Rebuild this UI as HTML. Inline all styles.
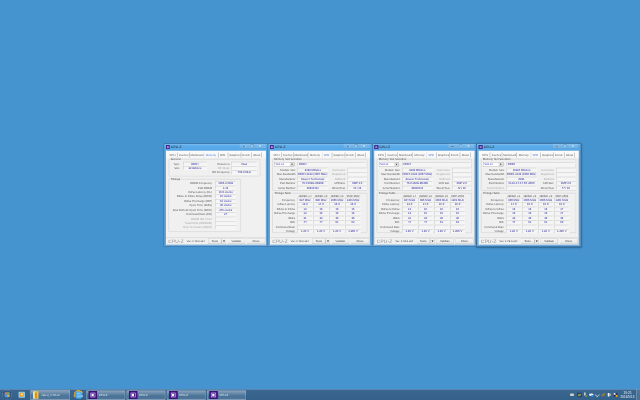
<!DOCTYPE html><html><head><meta charset="utf-8"><style>
html,body{margin:0;padding:0}
body{width:640px;height:400px;overflow:hidden;background:#4593cf;position:relative}
#s{position:absolute;left:0;top:0;width:2560px;height:1600px;transform:scale(0.25);transform-origin:0 0;filter:saturate(1);text-rendering:geometricPrecision}
#s div{position:absolute;box-sizing:border-box}
.t,.f,.b,.gbt{font-family:"Liberation Sans",sans-serif;font-size:11px;letter-spacing:0;color:#585858;white-space:nowrap;line-height:16px}
.win{background:linear-gradient(#6ab4ee,#58a9e8 12px,#56a8e8 30px,#5ea4dc 60px,#62a4da);border:3px solid rgba(25,55,95,.45);border-radius:7px 7px 3px 3px;box-shadow:inset 0 0 0 1px rgba(255,255,255,.35)}
.win.act{box-shadow:inset 0 0 0 1px rgba(255,255,255,.35),2px 2px 6px rgba(0,0,0,.3)}
.ico{background:#4a1890;border:1px solid #2a0a60;box-shadow:inset 0 0 0 3px #4a1890,inset 0 0 0 5px #c8bce0}
.cap{border:1px solid rgba(40,70,110,.45);border-top:none;border-radius:0 0 4px 4px;background:rgba(255,255,255,.12);box-shadow:inset 0 0 0 1px rgba(255,255,255,.3)}
.cl{background:#f0f0f0;border:1px solid #a9b8c8;border-left:4px solid #f4f0ec}
.gb{border:2px solid #cacaca;border-radius:2px;box-shadow:1px 1px 0 #fff inset,1px 1px 0 #fff}
.gbt{background:#f0f0f0;padding:0 2px;color:#383838}
.f{border:2px solid #c8c8c8;border-right-color:#f8f8f8;border-bottom-color:#f8f8f8;background:#f5f5f5;color:#5a5ac4;overflow:hidden}
.b{border:2px solid #c0c0c0;border-bottom-color:#a8a8a8;border-right-color:#b0b0b0;border-radius:3px;background:linear-gradient(#f8f8f8,#e6e6e6);text-align:left;color:#404040!important}
.dd{border:1px solid #7a7a7a;background:#fff}
.tb{background:linear-gradient(#6a88a8 0,#58789a 3px,#3a6690 5px,#34618a)}
.tbb{border:2px solid rgba(190,210,230,.5);border-radius:3px;background:linear-gradient(rgba(255,255,255,.4),rgba(255,255,255,.2) 40%,rgba(255,255,255,.1) 60%,rgba(255,255,255,.14));box-shadow:inset 0 0 0 1px rgba(255,255,255,.15)}
</style></head><body><div id="s"><div class="win" style="left:654px;top:573px;width:420px;height:414px"></div>
<div class="ico" style="left:664px;top:581px;width:15px;height:15px"></div>
<div class="t" style="left:684px;top:579px;text-align:left;font-size:13px;color:#202020;letter-spacing:.5px">CPU-Z</div>
<div class="cap" style="left:958px;top:574px;width:106px;height:21px"></div>
<div style="left:1002px;top:575px;width:1px;height:19px;background:rgba(255,255,255,.35)"></div>
<div style="left:1028px;top:575px;width:1px;height:19px;background:rgba(255,255,255,.35)"></div>
<div style="left:972px;top:584px;width:11px;height:4px;background:#f4eee0;border:1px solid rgba(60,80,110,.55)"></div>
<div style="left:1003px;top:578px;width:11px;height:10px;border:1px solid rgba(60,80,110,.55);box-shadow:inset 0 0 0 2px #f0ece0;border-top-width:3px"></div>
<div class="t" style="left:1036px;top:575px;font-size:14px;line-height:14px;color:#f4eadc;font-weight:bold;text-rendering:auto">x</div>
<div class="cl" style="left:664px;top:603px;width:400px;height:376px"></div>
<div style="left:665px;top:604px;width:398px;height:28px;background:linear-gradient(#fbfbfb,#f6f6f6)"></div>
<div class="t" style="left:670px;top:611px;text-align:left;color:#5a5a5a;width:40px;text-align:center">CPU</div>
<div class="t" style="left:706px;top:611px;text-align:left;color:#5a5a5a;width:58px;text-align:center">Caches</div>
<div class="t" style="left:754px;top:611px;text-align:left;color:#5a5a5a;width:68px;text-align:center">Mainboard</div>
<div class="t" style="left:814px;top:611px;text-align:left;color:#4a78d8;width:60px;text-align:center">Memory</div>
<div class="t" style="left:870px;top:611px;text-align:left;color:#5a5a5a;width:40px;text-align:center">SPD</div>
<div class="t" style="left:908px;top:611px;text-align:left;color:#5a5a5a;width:64px;text-align:center">Graphics</div>
<div class="t" style="left:960px;top:611px;text-align:left;color:#5a5a5a;width:50px;text-align:center">Bench</div>
<div class="t" style="left:1002px;top:611px;text-align:left;color:#5a5a5a;width:50px;text-align:center">About</div>
<div style="left:708px;top:610px;width:2px;height:20px;background:#a0a0a0"></div>
<div style="left:756px;top:610px;width:2px;height:20px;background:#a0a0a0"></div>
<div style="left:815px;top:610px;width:2px;height:20px;background:#d8d8d8"></div>
<div style="left:872px;top:610px;width:2px;height:20px;background:#a0a0a0"></div>
<div style="left:911px;top:610px;width:2px;height:20px;background:#a0a0a0"></div>
<div style="left:963px;top:610px;width:2px;height:20px;background:#a0a0a0"></div>
<div style="left:1005px;top:610px;width:2px;height:20px;background:#a0a0a0"></div>
<div style="left:1046px;top:610px;width:2px;height:20px;background:#a0a0a0"></div>
<div class="gb" style="left:675px;top:636px;width:367px;height:70px"></div>
<div class="gbt" style="left:681px;top:628px">General</div>
<div class="t" style="left:518px;top:647px;width:200px;text-align:right;">Type</div>
<div class="f" style="left:732px;top:647px;width:95px;height:16px;line-height:12px;text-align:center;color:#1f1f9e">DDR4</div>
<div class="t" style="left:518px;top:664px;width:200px;text-align:right;">Size</div>
<div class="f" style="left:732px;top:664px;width:95px;height:16px;line-height:12px;text-align:center;color:#1f1f9e">32 GBytes</div>
<div class="t" style="left:719px;top:647px;width:200px;text-align:right;">Channel #</div>
<div class="f" style="left:926px;top:647px;width:102px;height:16px;line-height:12px;text-align:center;color:#1f1f9e">Dual</div>
<div class="t" style="left:719px;top:664px;width:200px;text-align:right;color:#a8a8a8;">DC Mode</div>
<div class="f" style="left:926px;top:664px;width:102px;height:16px;line-height:12px;text-align:center;color:#1f1f9e"></div>
<div class="t" style="left:719px;top:682px;width:200px;text-align:right;">NB Frequency</div>
<div class="f" style="left:926px;top:682px;width:102px;height:16px;line-height:12px;text-align:center;color:#1f1f9e">706.8 MHz</div>
<div class="gb" style="left:674px;top:716px;width:290px;height:212px"></div>
<div class="gbt" style="left:680px;top:708px">Timings</div>
<div class="t" style="left:648px;top:725px;width:200px;text-align:right;">DRAM Frequency</div>
<div class="f" style="left:861px;top:725px;width:83px;height:16px;line-height:12px;text-align:center;color:#1f1f9e">1066.3 MHz</div>
<div class="t" style="left:648px;top:743px;width:200px;text-align:right;">FSB:DRAM</div>
<div class="f" style="left:861px;top:743px;width:83px;height:16px;line-height:12px;text-align:center;color:#1f1f9e">1:16</div>
<div class="t" style="left:648px;top:760px;width:200px;text-align:right;">CAS# Latency (CL)</div>
<div class="f" style="left:861px;top:760px;width:83px;height:16px;line-height:12px;text-align:center;color:#1f1f9e">15.0 clocks</div>
<div class="t" style="left:648px;top:778px;width:200px;text-align:right;">RAS# to CAS# Delay (tRCD)</div>
<div class="f" style="left:861px;top:778px;width:83px;height:16px;line-height:12px;text-align:center;color:#1f1f9e">15 clocks</div>
<div class="t" style="left:648px;top:796px;width:200px;text-align:right;">RAS# Precharge (tRP)</div>
<div class="f" style="left:861px;top:796px;width:83px;height:16px;line-height:12px;text-align:center;color:#1f1f9e">15 clocks</div>
<div class="t" style="left:648px;top:813px;width:200px;text-align:right;">Cycle Time (tRAS)</div>
<div class="f" style="left:861px;top:813px;width:83px;height:16px;line-height:12px;text-align:center;color:#1f1f9e">36 clocks</div>
<div class="t" style="left:648px;top:831px;width:200px;text-align:right;">Row Refresh Cycle Time (tRFC)</div>
<div class="f" style="left:861px;top:831px;width:83px;height:16px;line-height:12px;text-align:center;color:#1f1f9e">276 clocks</div>
<div class="t" style="left:648px;top:849px;width:200px;text-align:right;">Command Rate (CR)</div>
<div class="f" style="left:861px;top:849px;width:83px;height:16px;line-height:12px;text-align:center;color:#1f1f9e">2T</div>
<div class="t" style="left:648px;top:867px;width:200px;text-align:right;color:#a8a8a8;">DRAM Idle Timer</div>
<div class="f" style="left:861px;top:867px;width:83px;height:16px;line-height:12px;text-align:center;color:#1f1f9e"></div>
<div class="t" style="left:648px;top:884px;width:200px;text-align:right;color:#a8a8a8;">Total CAS# (tRDRAM)</div>
<div class="f" style="left:861px;top:884px;width:83px;height:16px;line-height:12px;text-align:center;color:#1f1f9e"></div>
<div class="t" style="left:648px;top:902px;width:200px;text-align:right;color:#a8a8a8;">Row To Column (tRCD)</div>
<div class="f" style="left:861px;top:902px;width:83px;height:16px;line-height:12px;text-align:center;color:#1f1f9e"></div>
<div style="left:665px;top:948px;width:398px;height:3px;background:#cfcfcf"></div>
<div style="left:665px;top:951px;width:398px;height:1px;background:#fafafa"></div>
<div class="t" style="left:673px;top:956px;text-align:left;font-size:19px;line-height:19px;color:#8c8c8c;letter-spacing:1px">CPU-Z</div>
<div class="t" style="left:740px;top:960px;text-align:left;font-size:10px;line-height:12px;color:#303030;width:86px;text-align:center;letter-spacing:.3px">Ver. 1.78.0.x64</div>
<div class="b" style="left:832px;top:953px;width:73px;height:23px;line-height:21px"><span style="display:inline-block;text-align:center;width:49px">Tools</span></div>
<div style="left:885px;top:957px;width:2px;height:15px;background:#909090"></div>
<div style="left:892px;top:962px;width:8px;height:5px;border-top:6px solid #202020;border-left:4px solid transparent;border-right:4px solid transparent;width:0;height:0;box-sizing:content-box"></div>
<div class="b" style="left:910px;top:953px;width:71px;height:23px;line-height:21px"><span style="display:inline-block;text-align:center;width:67px">Validate</span></div>
<div class="b" style="left:987px;top:953px;width:74px;height:23px;line-height:21px"><span style="display:inline-block;text-align:center;width:70px">Close</span></div>
<div class="win" style="left:1070px;top:573px;width:420px;height:414px"></div>
<div class="ico" style="left:1080px;top:581px;width:15px;height:15px"></div>
<div class="t" style="left:1100px;top:579px;text-align:left;font-size:13px;color:#202020;letter-spacing:.5px">CPU-Z</div>
<div class="cap" style="left:1374px;top:574px;width:106px;height:21px"></div>
<div style="left:1418px;top:575px;width:1px;height:19px;background:rgba(255,255,255,.35)"></div>
<div style="left:1444px;top:575px;width:1px;height:19px;background:rgba(255,255,255,.35)"></div>
<div style="left:1388px;top:584px;width:11px;height:4px;background:#f4eee0;border:1px solid rgba(60,80,110,.55)"></div>
<div style="left:1419px;top:578px;width:11px;height:10px;border:1px solid rgba(60,80,110,.55);box-shadow:inset 0 0 0 2px #f0ece0;border-top-width:3px"></div>
<div class="t" style="left:1452px;top:575px;font-size:14px;line-height:14px;color:#f4eadc;font-weight:bold;text-rendering:auto">x</div>
<div class="cl" style="left:1080px;top:603px;width:400px;height:376px"></div>
<div style="left:1081px;top:604px;width:398px;height:28px;background:linear-gradient(#fbfbfb,#f6f6f6)"></div>
<div class="t" style="left:1086px;top:611px;text-align:left;color:#5a5a5a;width:40px;text-align:center">CPU</div>
<div class="t" style="left:1122px;top:611px;text-align:left;color:#5a5a5a;width:58px;text-align:center">Caches</div>
<div class="t" style="left:1170px;top:611px;text-align:left;color:#5a5a5a;width:68px;text-align:center">Mainboard</div>
<div class="t" style="left:1230px;top:611px;text-align:left;color:#5a5a5a;width:60px;text-align:center">Memory</div>
<div class="t" style="left:1286px;top:611px;text-align:left;color:#4a78d8;width:40px;text-align:center">SPD</div>
<div class="t" style="left:1324px;top:611px;text-align:left;color:#5a5a5a;width:64px;text-align:center">Graphics</div>
<div class="t" style="left:1376px;top:611px;text-align:left;color:#5a5a5a;width:50px;text-align:center">Bench</div>
<div class="t" style="left:1418px;top:611px;text-align:left;color:#5a5a5a;width:50px;text-align:center">About</div>
<div style="left:1124px;top:610px;width:2px;height:20px;background:#a0a0a0"></div>
<div style="left:1172px;top:610px;width:2px;height:20px;background:#a0a0a0"></div>
<div style="left:1231px;top:610px;width:2px;height:20px;background:#a0a0a0"></div>
<div style="left:1288px;top:610px;width:2px;height:20px;background:#d8d8d8"></div>
<div style="left:1327px;top:610px;width:2px;height:20px;background:#a0a0a0"></div>
<div style="left:1379px;top:610px;width:2px;height:20px;background:#a0a0a0"></div>
<div style="left:1421px;top:610px;width:2px;height:20px;background:#a0a0a0"></div>
<div style="left:1462px;top:610px;width:2px;height:20px;background:#a0a0a0"></div>
<div class="gb" style="left:1089px;top:636px;width:381px;height:127px"></div>
<div class="gbt" style="left:1095px;top:628px">Memory Slot Selection</div>
<div class="dd" style="left:1098px;top:648px;width:80px;height:18px"></div>
<div class="t" style="left:1102px;top:650px;text-align:left;color:#3030c0">Slot #1</div>
<div style="left:1160px;top:650px;width:17px;height:15px;background:linear-gradient(#f8f8f8,#dcdcdc);border:1px solid #a0a0a0;border-radius:1px"></div>
<div style="left:1164px;top:655px;width:9px;height:5px;border-top:5px solid #202020;border-left:4px solid transparent;border-right:4px solid transparent;width:0;height:0;box-sizing:content-box"></div>
<div class="f" style="left:1190px;top:649px;width:274px;height:16px;line-height:12px;text-align:left;padding-left:4px;color:#1f1f9e">DDR4</div>
<div class="t" style="left:982px;top:671px;width:200px;text-align:right;">Module Size</div>
<div class="f" style="left:1190px;top:671px;width:122px;height:16px;line-height:12px;text-align:center;color:#1f1f9e">8192 MBytes</div>
<div class="t" style="left:982px;top:689px;width:200px;text-align:right;">Max Bandwidth</div>
<div class="f" style="left:1190px;top:689px;width:122px;height:16px;line-height:12px;text-align:center;color:#1f1f9e">DDR4-2133 (1067 MHz)</div>
<div class="t" style="left:982px;top:707px;width:200px;text-align:right;">Manufacturer</div>
<div class="f" style="left:1190px;top:707px;width:122px;height:16px;line-height:12px;text-align:center;color:#1f1f9e">Apacer Technology</div>
<div class="t" style="left:982px;top:725px;width:200px;text-align:right;">Part Number</div>
<div class="f" style="left:1190px;top:725px;width:122px;height:16px;line-height:12px;text-align:center;color:#1f1f9e">76.C102G.9D30B</div>
<div class="t" style="left:982px;top:743px;width:200px;text-align:right;">Serial Number</div>
<div class="f" style="left:1190px;top:743px;width:122px;height:16px;line-height:12px;text-align:center;color:#1f1f9e">36910421</div>
<div class="t" style="left:1181px;top:671px;width:200px;text-align:right;color:#a8a8a8;">Correction</div>
<div class="f" style="left:1390px;top:671px;width:77px;height:16px;line-height:12px;text-align:center;color:#1f1f9e"></div>
<div class="t" style="left:1181px;top:689px;width:200px;text-align:right;color:#a8a8a8;">Registered</div>
<div class="f" style="left:1390px;top:689px;width:77px;height:16px;line-height:12px;text-align:center;color:#1f1f9e"></div>
<div class="t" style="left:1181px;top:707px;width:200px;text-align:right;color:#a8a8a8;">Buffered</div>
<div class="f" style="left:1390px;top:707px;width:77px;height:16px;line-height:12px;text-align:center;color:#1f1f9e"></div>
<div class="t" style="left:1181px;top:725px;width:200px;text-align:right;">SPD Ext.</div>
<div class="f" style="left:1390px;top:725px;width:77px;height:16px;line-height:12px;text-align:center;color:#1f1f9e">XMP 2.0</div>
<div class="t" style="left:1181px;top:743px;width:200px;text-align:right;">Week/Year</div>
<div class="f" style="left:1390px;top:743px;width:77px;height:16px;line-height:12px;text-align:center;color:#1f1f9e">42 / 15</div>
<div class="gb" style="left:1089px;top:772px;width:381px;height:160px"></div>
<div class="gbt" style="left:1095px;top:764px">Timings Table</div>
<div class="t" style="left:1190px;top:776px;text-align:left;width:60px;text-align:center">JEDEC #4</div>
<div class="t" style="left:1254px;top:776px;text-align:left;width:60px;text-align:center">JEDEC #5</div>
<div class="t" style="left:1318px;top:776px;text-align:left;width:60px;text-align:center">JEDEC #6</div>
<div class="t" style="left:1382px;top:776px;text-align:left;width:60px;text-align:center">XMP-2602</div>
<div class="t" style="left:980px;top:791px;width:200px;text-align:right;">Frequency</div>
<div class="f" style="left:1190px;top:791px;width:60px;height:16px;line-height:12px;text-align:center;color:#1f1f9e">924 MHz</div>
<div class="f" style="left:1254px;top:791px;width:60px;height:16px;line-height:12px;text-align:center;color:#1f1f9e">985 MHz</div>
<div class="f" style="left:1318px;top:791px;width:60px;height:16px;line-height:12px;text-align:center;color:#1f1f9e">1066 MHz</div>
<div class="f" style="left:1382px;top:791px;width:60px;height:16px;line-height:12px;text-align:center;color:#1f1f9e">1301 MHz</div>
<div class="t" style="left:980px;top:809px;width:200px;text-align:right;">CAS# Latency</div>
<div class="f" style="left:1190px;top:809px;width:60px;height:16px;line-height:12px;text-align:center;color:#1f1f9e">13.0</div>
<div class="f" style="left:1254px;top:809px;width:60px;height:16px;line-height:12px;text-align:center;color:#1f1f9e">14.0</div>
<div class="f" style="left:1318px;top:809px;width:60px;height:16px;line-height:12px;text-align:center;color:#1f1f9e">15.0</div>
<div class="f" style="left:1382px;top:809px;width:60px;height:16px;line-height:12px;text-align:center;color:#1f1f9e">16.0</div>
<div class="t" style="left:980px;top:827px;width:200px;text-align:right;">RAS# to CAS#</div>
<div class="f" style="left:1190px;top:827px;width:60px;height:16px;line-height:12px;text-align:center;color:#1f1f9e">13</div>
<div class="f" style="left:1254px;top:827px;width:60px;height:16px;line-height:12px;text-align:center;color:#1f1f9e">15</div>
<div class="f" style="left:1318px;top:827px;width:60px;height:16px;line-height:12px;text-align:center;color:#1f1f9e">15</div>
<div class="f" style="left:1382px;top:827px;width:60px;height:16px;line-height:12px;text-align:center;color:#1f1f9e">16</div>
<div class="t" style="left:980px;top:845px;width:200px;text-align:right;">RAS# Precharge</div>
<div class="f" style="left:1190px;top:845px;width:60px;height:16px;line-height:12px;text-align:center;color:#1f1f9e">13</div>
<div class="f" style="left:1254px;top:845px;width:60px;height:16px;line-height:12px;text-align:center;color:#1f1f9e">15</div>
<div class="f" style="left:1318px;top:845px;width:60px;height:16px;line-height:12px;text-align:center;color:#1f1f9e">15</div>
<div class="f" style="left:1382px;top:845px;width:60px;height:16px;line-height:12px;text-align:center;color:#1f1f9e">16</div>
<div class="t" style="left:980px;top:863px;width:200px;text-align:right;">tRAS</div>
<div class="f" style="left:1190px;top:863px;width:60px;height:16px;line-height:12px;text-align:center;color:#1f1f9e">31</div>
<div class="f" style="left:1254px;top:863px;width:60px;height:16px;line-height:12px;text-align:center;color:#1f1f9e">33</div>
<div class="f" style="left:1318px;top:863px;width:60px;height:16px;line-height:12px;text-align:center;color:#1f1f9e">36</div>
<div class="f" style="left:1382px;top:863px;width:60px;height:16px;line-height:12px;text-align:center;color:#1f1f9e">36</div>
<div class="t" style="left:980px;top:881px;width:200px;text-align:right;">tRC</div>
<div class="f" style="left:1190px;top:881px;width:60px;height:16px;line-height:12px;text-align:center;color:#1f1f9e">44</div>
<div class="f" style="left:1254px;top:881px;width:60px;height:16px;line-height:12px;text-align:center;color:#1f1f9e">47</div>
<div class="f" style="left:1318px;top:881px;width:60px;height:16px;line-height:12px;text-align:center;color:#1f1f9e">51</div>
<div class="f" style="left:1382px;top:881px;width:60px;height:16px;line-height:12px;text-align:center;color:#1f1f9e">52</div>
<div class="t" style="left:980px;top:899px;width:200px;text-align:right;">Command Rate</div>
<div class="f" style="left:1190px;top:899px;width:60px;height:16px;line-height:12px;text-align:center;color:#1f1f9e"></div>
<div class="f" style="left:1254px;top:899px;width:60px;height:16px;line-height:12px;text-align:center;color:#1f1f9e"></div>
<div class="f" style="left:1318px;top:899px;width:60px;height:16px;line-height:12px;text-align:center;color:#1f1f9e"></div>
<div class="f" style="left:1382px;top:899px;width:60px;height:16px;line-height:12px;text-align:center;color:#1f1f9e"></div>
<div class="t" style="left:980px;top:917px;width:200px;text-align:right;">Voltage</div>
<div class="f" style="left:1190px;top:917px;width:60px;height:16px;line-height:12px;text-align:center;color:#1f1f9e">1.20 V</div>
<div class="f" style="left:1254px;top:917px;width:60px;height:16px;line-height:12px;text-align:center;color:#1f1f9e">1.20 V</div>
<div class="f" style="left:1318px;top:917px;width:60px;height:16px;line-height:12px;text-align:center;color:#1f1f9e">1.20 V</div>
<div class="f" style="left:1382px;top:917px;width:60px;height:16px;line-height:12px;text-align:center;color:#1f1f9e">1.350 V</div>
<div style="left:1081px;top:948px;width:398px;height:3px;background:#cfcfcf"></div>
<div style="left:1081px;top:951px;width:398px;height:1px;background:#fafafa"></div>
<div class="t" style="left:1089px;top:956px;text-align:left;font-size:19px;line-height:19px;color:#8c8c8c;letter-spacing:1px">CPU-Z</div>
<div class="t" style="left:1156px;top:960px;text-align:left;font-size:10px;line-height:12px;color:#303030;width:86px;text-align:center;letter-spacing:.3px">Ver. 1.78.0.x64</div>
<div class="b" style="left:1248px;top:953px;width:73px;height:23px;line-height:21px"><span style="display:inline-block;text-align:center;width:49px">Tools</span></div>
<div style="left:1301px;top:957px;width:2px;height:15px;background:#909090"></div>
<div style="left:1308px;top:962px;width:8px;height:5px;border-top:6px solid #202020;border-left:4px solid transparent;border-right:4px solid transparent;width:0;height:0;box-sizing:content-box"></div>
<div class="b" style="left:1326px;top:953px;width:71px;height:23px;line-height:21px"><span style="display:inline-block;text-align:center;width:67px">Validate</span></div>
<div class="b" style="left:1403px;top:953px;width:74px;height:23px;line-height:21px"><span style="display:inline-block;text-align:center;width:70px">Close</span></div>
<div class="win" style="left:1488px;top:573px;width:420px;height:414px"></div>
<div class="ico" style="left:1498px;top:581px;width:15px;height:15px"></div>
<div class="t" style="left:1518px;top:579px;text-align:left;font-size:13px;color:#202020;letter-spacing:.5px">CPU-Z</div>
<div class="cap" style="left:1792px;top:574px;width:106px;height:21px"></div>
<div style="left:1836px;top:575px;width:1px;height:19px;background:rgba(255,255,255,.35)"></div>
<div style="left:1862px;top:575px;width:1px;height:19px;background:rgba(255,255,255,.35)"></div>
<div style="left:1806px;top:584px;width:11px;height:4px;background:#f4eee0;border:1px solid rgba(60,80,110,.55)"></div>
<div style="left:1837px;top:578px;width:11px;height:10px;border:1px solid rgba(60,80,110,.55);box-shadow:inset 0 0 0 2px #f0ece0;border-top-width:3px"></div>
<div class="t" style="left:1870px;top:575px;font-size:14px;line-height:14px;color:#f4eadc;font-weight:bold;text-rendering:auto">x</div>
<div class="cl" style="left:1498px;top:603px;width:400px;height:376px"></div>
<div style="left:1499px;top:604px;width:398px;height:28px;background:linear-gradient(#fbfbfb,#f6f6f6)"></div>
<div class="t" style="left:1504px;top:611px;text-align:left;color:#5a5a5a;width:40px;text-align:center">CPU</div>
<div class="t" style="left:1540px;top:611px;text-align:left;color:#5a5a5a;width:58px;text-align:center">Caches</div>
<div class="t" style="left:1588px;top:611px;text-align:left;color:#5a5a5a;width:68px;text-align:center">Mainboard</div>
<div class="t" style="left:1648px;top:611px;text-align:left;color:#5a5a5a;width:60px;text-align:center">Memory</div>
<div class="t" style="left:1704px;top:611px;text-align:left;color:#4a78d8;width:40px;text-align:center">SPD</div>
<div class="t" style="left:1742px;top:611px;text-align:left;color:#5a5a5a;width:64px;text-align:center">Graphics</div>
<div class="t" style="left:1794px;top:611px;text-align:left;color:#5a5a5a;width:50px;text-align:center">Bench</div>
<div class="t" style="left:1836px;top:611px;text-align:left;color:#5a5a5a;width:50px;text-align:center">About</div>
<div style="left:1542px;top:610px;width:2px;height:20px;background:#a0a0a0"></div>
<div style="left:1590px;top:610px;width:2px;height:20px;background:#a0a0a0"></div>
<div style="left:1649px;top:610px;width:2px;height:20px;background:#a0a0a0"></div>
<div style="left:1706px;top:610px;width:2px;height:20px;background:#d8d8d8"></div>
<div style="left:1745px;top:610px;width:2px;height:20px;background:#a0a0a0"></div>
<div style="left:1797px;top:610px;width:2px;height:20px;background:#a0a0a0"></div>
<div style="left:1839px;top:610px;width:2px;height:20px;background:#a0a0a0"></div>
<div style="left:1880px;top:610px;width:2px;height:20px;background:#a0a0a0"></div>
<div class="gb" style="left:1507px;top:636px;width:381px;height:127px"></div>
<div class="gbt" style="left:1513px;top:628px">Memory Slot Selection</div>
<div class="dd" style="left:1516px;top:648px;width:80px;height:18px"></div>
<div class="t" style="left:1520px;top:650px;text-align:left;color:#3030c0">Slot #1</div>
<div style="left:1578px;top:650px;width:17px;height:15px;background:linear-gradient(#f8f8f8,#dcdcdc);border:1px solid #a0a0a0;border-radius:1px"></div>
<div style="left:1582px;top:655px;width:9px;height:5px;border-top:5px solid #202020;border-left:4px solid transparent;border-right:4px solid transparent;width:0;height:0;box-sizing:content-box"></div>
<div class="f" style="left:1608px;top:649px;width:274px;height:16px;line-height:12px;text-align:left;padding-left:4px;color:#1f1f9e">DDR4</div>
<div class="t" style="left:1400px;top:671px;width:200px;text-align:right;">Module Size</div>
<div class="f" style="left:1608px;top:671px;width:122px;height:16px;line-height:12px;text-align:center;color:#1f1f9e">8192 MBytes</div>
<div class="t" style="left:1400px;top:689px;width:200px;text-align:right;">Max Bandwidth</div>
<div class="f" style="left:1608px;top:689px;width:122px;height:16px;line-height:12px;text-align:center;color:#1f1f9e">DDR4-2133 (1067 MHz)</div>
<div class="t" style="left:1400px;top:707px;width:200px;text-align:right;">Manufacturer</div>
<div class="f" style="left:1608px;top:707px;width:122px;height:16px;line-height:12px;text-align:center;color:#1f1f9e">Apacer Technology</div>
<div class="t" style="left:1400px;top:725px;width:200px;text-align:right;">Part Number</div>
<div class="f" style="left:1608px;top:725px;width:122px;height:16px;line-height:12px;text-align:center;color:#1f1f9e">76.C102G.9D30B</div>
<div class="t" style="left:1400px;top:743px;width:200px;text-align:right;">Serial Number</div>
<div class="f" style="left:1608px;top:743px;width:122px;height:16px;line-height:12px;text-align:center;color:#1f1f9e">36910421</div>
<div class="t" style="left:1599px;top:671px;width:200px;text-align:right;color:#a8a8a8;">Correction</div>
<div class="f" style="left:1808px;top:671px;width:77px;height:16px;line-height:12px;text-align:center;color:#1f1f9e"></div>
<div class="t" style="left:1599px;top:689px;width:200px;text-align:right;color:#a8a8a8;">Registered</div>
<div class="f" style="left:1808px;top:689px;width:77px;height:16px;line-height:12px;text-align:center;color:#1f1f9e"></div>
<div class="t" style="left:1599px;top:707px;width:200px;text-align:right;color:#a8a8a8;">Buffered</div>
<div class="f" style="left:1808px;top:707px;width:77px;height:16px;line-height:12px;text-align:center;color:#1f1f9e"></div>
<div class="t" style="left:1599px;top:725px;width:200px;text-align:right;">SPD Ext.</div>
<div class="f" style="left:1808px;top:725px;width:77px;height:16px;line-height:12px;text-align:center;color:#1f1f9e">XMP 2.0</div>
<div class="t" style="left:1599px;top:743px;width:200px;text-align:right;">Week/Year</div>
<div class="f" style="left:1808px;top:743px;width:77px;height:16px;line-height:12px;text-align:center;color:#1f1f9e">42 / 15</div>
<div class="gb" style="left:1507px;top:772px;width:381px;height:160px"></div>
<div class="gbt" style="left:1513px;top:764px">Timings Table</div>
<div class="t" style="left:1608px;top:776px;text-align:left;width:60px;text-align:center">JEDEC #4</div>
<div class="t" style="left:1672px;top:776px;text-align:left;width:60px;text-align:center">JEDEC #5</div>
<div class="t" style="left:1736px;top:776px;text-align:left;width:60px;text-align:center">JEDEC #6</div>
<div class="t" style="left:1800px;top:776px;text-align:left;width:60px;text-align:center">XMP-2602</div>
<div class="t" style="left:1398px;top:791px;width:200px;text-align:right;">Frequency</div>
<div class="f" style="left:1608px;top:791px;width:60px;height:16px;line-height:12px;text-align:center;color:#1f1f9e">924 MHz</div>
<div class="f" style="left:1672px;top:791px;width:60px;height:16px;line-height:12px;text-align:center;color:#1f1f9e">985 MHz</div>
<div class="f" style="left:1736px;top:791px;width:60px;height:16px;line-height:12px;text-align:center;color:#1f1f9e">1066 MHz</div>
<div class="f" style="left:1800px;top:791px;width:60px;height:16px;line-height:12px;text-align:center;color:#1f1f9e">1301 MHz</div>
<div class="t" style="left:1398px;top:809px;width:200px;text-align:right;">CAS# Latency</div>
<div class="f" style="left:1608px;top:809px;width:60px;height:16px;line-height:12px;text-align:center;color:#1f1f9e">13.0</div>
<div class="f" style="left:1672px;top:809px;width:60px;height:16px;line-height:12px;text-align:center;color:#1f1f9e">14.0</div>
<div class="f" style="left:1736px;top:809px;width:60px;height:16px;line-height:12px;text-align:center;color:#1f1f9e">15.0</div>
<div class="f" style="left:1800px;top:809px;width:60px;height:16px;line-height:12px;text-align:center;color:#1f1f9e">16.0</div>
<div class="t" style="left:1398px;top:827px;width:200px;text-align:right;">RAS# to CAS#</div>
<div class="f" style="left:1608px;top:827px;width:60px;height:16px;line-height:12px;text-align:center;color:#1f1f9e">13</div>
<div class="f" style="left:1672px;top:827px;width:60px;height:16px;line-height:12px;text-align:center;color:#1f1f9e">15</div>
<div class="f" style="left:1736px;top:827px;width:60px;height:16px;line-height:12px;text-align:center;color:#1f1f9e">15</div>
<div class="f" style="left:1800px;top:827px;width:60px;height:16px;line-height:12px;text-align:center;color:#1f1f9e">16</div>
<div class="t" style="left:1398px;top:845px;width:200px;text-align:right;">RAS# Precharge</div>
<div class="f" style="left:1608px;top:845px;width:60px;height:16px;line-height:12px;text-align:center;color:#1f1f9e">13</div>
<div class="f" style="left:1672px;top:845px;width:60px;height:16px;line-height:12px;text-align:center;color:#1f1f9e">15</div>
<div class="f" style="left:1736px;top:845px;width:60px;height:16px;line-height:12px;text-align:center;color:#1f1f9e">15</div>
<div class="f" style="left:1800px;top:845px;width:60px;height:16px;line-height:12px;text-align:center;color:#1f1f9e">16</div>
<div class="t" style="left:1398px;top:863px;width:200px;text-align:right;">tRAS</div>
<div class="f" style="left:1608px;top:863px;width:60px;height:16px;line-height:12px;text-align:center;color:#1f1f9e">31</div>
<div class="f" style="left:1672px;top:863px;width:60px;height:16px;line-height:12px;text-align:center;color:#1f1f9e">33</div>
<div class="f" style="left:1736px;top:863px;width:60px;height:16px;line-height:12px;text-align:center;color:#1f1f9e">36</div>
<div class="f" style="left:1800px;top:863px;width:60px;height:16px;line-height:12px;text-align:center;color:#1f1f9e">36</div>
<div class="t" style="left:1398px;top:881px;width:200px;text-align:right;">tRC</div>
<div class="f" style="left:1608px;top:881px;width:60px;height:16px;line-height:12px;text-align:center;color:#1f1f9e">44</div>
<div class="f" style="left:1672px;top:881px;width:60px;height:16px;line-height:12px;text-align:center;color:#1f1f9e">47</div>
<div class="f" style="left:1736px;top:881px;width:60px;height:16px;line-height:12px;text-align:center;color:#1f1f9e">51</div>
<div class="f" style="left:1800px;top:881px;width:60px;height:16px;line-height:12px;text-align:center;color:#1f1f9e">52</div>
<div class="t" style="left:1398px;top:899px;width:200px;text-align:right;">Command Rate</div>
<div class="f" style="left:1608px;top:899px;width:60px;height:16px;line-height:12px;text-align:center;color:#1f1f9e"></div>
<div class="f" style="left:1672px;top:899px;width:60px;height:16px;line-height:12px;text-align:center;color:#1f1f9e"></div>
<div class="f" style="left:1736px;top:899px;width:60px;height:16px;line-height:12px;text-align:center;color:#1f1f9e"></div>
<div class="f" style="left:1800px;top:899px;width:60px;height:16px;line-height:12px;text-align:center;color:#1f1f9e"></div>
<div class="t" style="left:1398px;top:917px;width:200px;text-align:right;">Voltage</div>
<div class="f" style="left:1608px;top:917px;width:60px;height:16px;line-height:12px;text-align:center;color:#1f1f9e">1.20 V</div>
<div class="f" style="left:1672px;top:917px;width:60px;height:16px;line-height:12px;text-align:center;color:#1f1f9e">1.20 V</div>
<div class="f" style="left:1736px;top:917px;width:60px;height:16px;line-height:12px;text-align:center;color:#1f1f9e">1.20 V</div>
<div class="f" style="left:1800px;top:917px;width:60px;height:16px;line-height:12px;text-align:center;color:#1f1f9e">1.350 V</div>
<div style="left:1499px;top:948px;width:398px;height:3px;background:#cfcfcf"></div>
<div style="left:1499px;top:951px;width:398px;height:1px;background:#fafafa"></div>
<div class="t" style="left:1507px;top:956px;text-align:left;font-size:19px;line-height:19px;color:#8c8c8c;letter-spacing:1px">CPU-Z</div>
<div class="t" style="left:1574px;top:960px;text-align:left;font-size:10px;line-height:12px;color:#303030;width:86px;text-align:center;letter-spacing:.3px">Ver. 1.78.0.x64</div>
<div class="b" style="left:1666px;top:953px;width:73px;height:23px;line-height:21px"><span style="display:inline-block;text-align:center;width:49px">Tools</span></div>
<div style="left:1719px;top:957px;width:2px;height:15px;background:#909090"></div>
<div style="left:1726px;top:962px;width:8px;height:5px;border-top:6px solid #202020;border-left:4px solid transparent;border-right:4px solid transparent;width:0;height:0;box-sizing:content-box"></div>
<div class="b" style="left:1744px;top:953px;width:71px;height:23px;line-height:21px"><span style="display:inline-block;text-align:center;width:67px">Validate</span></div>
<div class="b" style="left:1821px;top:953px;width:74px;height:23px;line-height:21px"><span style="display:inline-block;text-align:center;width:70px">Close</span></div>
<div class="win act" style="left:1905px;top:573px;width:420px;height:414px"></div>
<div class="ico" style="left:1915px;top:581px;width:15px;height:15px"></div>
<div class="t" style="left:1935px;top:579px;text-align:left;font-size:13px;color:#202020;letter-spacing:.5px">CPU-Z</div>
<div class="cap" style="left:2209px;top:574px;width:106px;height:21px"></div>
<div style="left:2253px;top:575px;width:1px;height:19px;background:rgba(255,255,255,.35)"></div>
<div style="left:2279px;top:575px;width:1px;height:19px;background:rgba(255,255,255,.35)"></div>
<div style="left:2223px;top:584px;width:11px;height:4px;background:#f4eee0;border:1px solid rgba(60,80,110,.55)"></div>
<div style="left:2254px;top:578px;width:11px;height:10px;border:1px solid rgba(60,80,110,.55);box-shadow:inset 0 0 0 2px #f0ece0;border-top-width:3px"></div>
<div class="t" style="left:2287px;top:575px;font-size:14px;line-height:14px;color:#f4eadc;font-weight:bold;text-rendering:auto">x</div>
<div class="cl" style="left:1915px;top:603px;width:400px;height:376px"></div>
<div style="left:1916px;top:604px;width:398px;height:28px;background:linear-gradient(#fbfbfb,#f6f6f6)"></div>
<div class="t" style="left:1921px;top:611px;text-align:left;color:#5a5a5a;width:40px;text-align:center">CPU</div>
<div class="t" style="left:1957px;top:611px;text-align:left;color:#5a5a5a;width:58px;text-align:center">Caches</div>
<div class="t" style="left:2005px;top:611px;text-align:left;color:#5a5a5a;width:68px;text-align:center">Mainboard</div>
<div class="t" style="left:2065px;top:611px;text-align:left;color:#5a5a5a;width:60px;text-align:center">Memory</div>
<div class="t" style="left:2121px;top:611px;text-align:left;color:#4a78d8;width:40px;text-align:center">SPD</div>
<div class="t" style="left:2159px;top:611px;text-align:left;color:#5a5a5a;width:64px;text-align:center">Graphics</div>
<div class="t" style="left:2211px;top:611px;text-align:left;color:#5a5a5a;width:50px;text-align:center">Bench</div>
<div class="t" style="left:2253px;top:611px;text-align:left;color:#5a5a5a;width:50px;text-align:center">About</div>
<div style="left:1959px;top:610px;width:2px;height:20px;background:#a0a0a0"></div>
<div style="left:2007px;top:610px;width:2px;height:20px;background:#a0a0a0"></div>
<div style="left:2066px;top:610px;width:2px;height:20px;background:#a0a0a0"></div>
<div style="left:2123px;top:610px;width:2px;height:20px;background:#d8d8d8"></div>
<div style="left:2162px;top:610px;width:2px;height:20px;background:#a0a0a0"></div>
<div style="left:2214px;top:610px;width:2px;height:20px;background:#a0a0a0"></div>
<div style="left:2256px;top:610px;width:2px;height:20px;background:#a0a0a0"></div>
<div style="left:2297px;top:610px;width:2px;height:20px;background:#a0a0a0"></div>
<div class="gb" style="left:1924px;top:636px;width:381px;height:127px"></div>
<div class="gbt" style="left:1930px;top:628px">Memory Slot Selection</div>
<div class="dd" style="left:1933px;top:648px;width:80px;height:18px"></div>
<div class="t" style="left:1937px;top:650px;text-align:left;color:#3030c0">Slot #1</div>
<div style="left:1995px;top:650px;width:17px;height:15px;background:linear-gradient(#f8f8f8,#dcdcdc);border:1px solid #a0a0a0;border-radius:1px"></div>
<div style="left:1999px;top:655px;width:9px;height:5px;border-top:5px solid #202020;border-left:4px solid transparent;border-right:4px solid transparent;width:0;height:0;box-sizing:content-box"></div>
<div class="f" style="left:2025px;top:649px;width:274px;height:16px;line-height:12px;text-align:left;padding-left:4px;color:#1f1f9e">DDR4</div>
<div class="t" style="left:1817px;top:671px;width:200px;text-align:right;">Module Size</div>
<div class="f" style="left:2025px;top:671px;width:122px;height:16px;line-height:12px;text-align:center;color:#1f1f9e">16384 MBytes</div>
<div class="t" style="left:1817px;top:689px;width:200px;text-align:right;">Max Bandwidth</div>
<div class="f" style="left:2025px;top:689px;width:122px;height:16px;line-height:12px;text-align:center;color:#1f1f9e">DDR4-2133 (1066 MHz)</div>
<div class="t" style="left:1817px;top:707px;width:200px;text-align:right;">Manufacturer</div>
<div class="f" style="left:2025px;top:707px;width:122px;height:16px;line-height:12px;text-align:center;color:#1f1f9e">0831</div>
<div class="t" style="left:1817px;top:725px;width:200px;text-align:right;">Part Number</div>
<div class="f" style="left:2025px;top:725px;width:122px;height:16px;line-height:12px;text-align:center;color:#1f1f9e">CL15-17-17 D4-2600</div>
<div class="t" style="left:1817px;top:743px;width:200px;text-align:right;color:#a8a8a8;">Serial Number</div>
<div class="f" style="left:2025px;top:743px;width:122px;height:16px;line-height:12px;text-align:center;color:#1f1f9e"></div>
<div class="t" style="left:2016px;top:671px;width:200px;text-align:right;color:#a8a8a8;">Correction</div>
<div class="f" style="left:2225px;top:671px;width:77px;height:16px;line-height:12px;text-align:center;color:#1f1f9e"></div>
<div class="t" style="left:2016px;top:689px;width:200px;text-align:right;color:#a8a8a8;">Registered</div>
<div class="f" style="left:2225px;top:689px;width:77px;height:16px;line-height:12px;text-align:center;color:#1f1f9e"></div>
<div class="t" style="left:2016px;top:707px;width:200px;text-align:right;color:#a8a8a8;">Buffered</div>
<div class="f" style="left:2225px;top:707px;width:77px;height:16px;line-height:12px;text-align:center;color:#1f1f9e"></div>
<div class="t" style="left:2016px;top:725px;width:200px;text-align:right;">SPD Ext.</div>
<div class="f" style="left:2225px;top:725px;width:77px;height:16px;line-height:12px;text-align:center;color:#1f1f9e">XMP 2.0</div>
<div class="t" style="left:2016px;top:743px;width:200px;text-align:right;">Week/Year</div>
<div class="f" style="left:2225px;top:743px;width:77px;height:16px;line-height:12px;text-align:center;color:#1f1f9e">47 / 15</div>
<div class="gb" style="left:1924px;top:772px;width:381px;height:160px"></div>
<div class="gbt" style="left:1930px;top:764px">Timings Table</div>
<div class="t" style="left:2025px;top:776px;text-align:left;width:60px;text-align:center">JEDEC #1</div>
<div class="t" style="left:2089px;top:776px;text-align:left;width:60px;text-align:center">JEDEC #2</div>
<div class="t" style="left:2153px;top:776px;text-align:left;width:60px;text-align:center">JEDEC #3</div>
<div class="t" style="left:2217px;top:776px;text-align:left;width:60px;text-align:center">XMP-2602</div>
<div class="t" style="left:1815px;top:791px;width:200px;text-align:right;">Frequency</div>
<div class="f" style="left:2025px;top:791px;width:60px;height:16px;line-height:12px;text-align:center;color:#1f1f9e">800 MHz</div>
<div class="f" style="left:2089px;top:791px;width:60px;height:16px;line-height:12px;text-align:center;color:#1f1f9e">1066 MHz</div>
<div class="f" style="left:2153px;top:791px;width:60px;height:16px;line-height:12px;text-align:center;color:#1f1f9e">1066 MHz</div>
<div class="f" style="left:2217px;top:791px;width:60px;height:16px;line-height:12px;text-align:center;color:#1f1f9e">1301 MHz</div>
<div class="t" style="left:1815px;top:809px;width:200px;text-align:right;">CAS# Latency</div>
<div class="f" style="left:2025px;top:809px;width:60px;height:16px;line-height:12px;text-align:center;color:#1f1f9e">14.0</div>
<div class="f" style="left:2089px;top:809px;width:60px;height:16px;line-height:12px;text-align:center;color:#1f1f9e">15.0</div>
<div class="f" style="left:2153px;top:809px;width:60px;height:16px;line-height:12px;text-align:center;color:#1f1f9e">16.0</div>
<div class="f" style="left:2217px;top:809px;width:60px;height:16px;line-height:12px;text-align:center;color:#1f1f9e">15.0</div>
<div class="t" style="left:1815px;top:827px;width:200px;text-align:right;">RAS# to CAS#</div>
<div class="f" style="left:2025px;top:827px;width:60px;height:16px;line-height:12px;text-align:center;color:#1f1f9e">15</div>
<div class="f" style="left:2089px;top:827px;width:60px;height:16px;line-height:12px;text-align:center;color:#1f1f9e">15</div>
<div class="f" style="left:2153px;top:827px;width:60px;height:16px;line-height:12px;text-align:center;color:#1f1f9e">15</div>
<div class="f" style="left:2217px;top:827px;width:60px;height:16px;line-height:12px;text-align:center;color:#1f1f9e">17</div>
<div class="t" style="left:1815px;top:845px;width:200px;text-align:right;">RAS# Precharge</div>
<div class="f" style="left:2025px;top:845px;width:60px;height:16px;line-height:12px;text-align:center;color:#1f1f9e">15</div>
<div class="f" style="left:2089px;top:845px;width:60px;height:16px;line-height:12px;text-align:center;color:#1f1f9e">15</div>
<div class="f" style="left:2153px;top:845px;width:60px;height:16px;line-height:12px;text-align:center;color:#1f1f9e">15</div>
<div class="f" style="left:2217px;top:845px;width:60px;height:16px;line-height:12px;text-align:center;color:#1f1f9e">17</div>
<div class="t" style="left:1815px;top:863px;width:200px;text-align:right;">tRAS</div>
<div class="f" style="left:2025px;top:863px;width:60px;height:16px;line-height:12px;text-align:center;color:#1f1f9e">33</div>
<div class="f" style="left:2089px;top:863px;width:60px;height:16px;line-height:12px;text-align:center;color:#1f1f9e">36</div>
<div class="f" style="left:2153px;top:863px;width:60px;height:16px;line-height:12px;text-align:center;color:#1f1f9e">36</div>
<div class="f" style="left:2217px;top:863px;width:60px;height:16px;line-height:12px;text-align:center;color:#1f1f9e">35</div>
<div class="t" style="left:1815px;top:881px;width:200px;text-align:right;">tRC</div>
<div class="f" style="left:2025px;top:881px;width:60px;height:16px;line-height:12px;text-align:center;color:#1f1f9e">47</div>
<div class="f" style="left:2089px;top:881px;width:60px;height:16px;line-height:12px;text-align:center;color:#1f1f9e">51</div>
<div class="f" style="left:2153px;top:881px;width:60px;height:16px;line-height:12px;text-align:center;color:#1f1f9e">51</div>
<div class="f" style="left:2217px;top:881px;width:60px;height:16px;line-height:12px;text-align:center;color:#1f1f9e">50</div>
<div class="t" style="left:1815px;top:899px;width:200px;text-align:right;">Command Rate</div>
<div class="f" style="left:2025px;top:899px;width:60px;height:16px;line-height:12px;text-align:center;color:#1f1f9e"></div>
<div class="f" style="left:2089px;top:899px;width:60px;height:16px;line-height:12px;text-align:center;color:#1f1f9e"></div>
<div class="f" style="left:2153px;top:899px;width:60px;height:16px;line-height:12px;text-align:center;color:#1f1f9e"></div>
<div class="f" style="left:2217px;top:899px;width:60px;height:16px;line-height:12px;text-align:center;color:#1f1f9e"></div>
<div class="t" style="left:1815px;top:917px;width:200px;text-align:right;">Voltage</div>
<div class="f" style="left:2025px;top:917px;width:60px;height:16px;line-height:12px;text-align:center;color:#1f1f9e">1.20 V</div>
<div class="f" style="left:2089px;top:917px;width:60px;height:16px;line-height:12px;text-align:center;color:#1f1f9e">1.20 V</div>
<div class="f" style="left:2153px;top:917px;width:60px;height:16px;line-height:12px;text-align:center;color:#1f1f9e">1.20 V</div>
<div class="f" style="left:2217px;top:917px;width:60px;height:16px;line-height:12px;text-align:center;color:#1f1f9e">1.350 V</div>
<div style="left:1916px;top:948px;width:398px;height:3px;background:#cfcfcf"></div>
<div style="left:1916px;top:951px;width:398px;height:1px;background:#fafafa"></div>
<div class="t" style="left:1924px;top:956px;text-align:left;font-size:19px;line-height:19px;color:#8c8c8c;letter-spacing:1px">CPU-Z</div>
<div class="t" style="left:1991px;top:960px;text-align:left;font-size:10px;line-height:12px;color:#303030;width:86px;text-align:center;letter-spacing:.3px">Ver. 1.78.0.x64</div>
<div class="b" style="left:2083px;top:953px;width:73px;height:23px;line-height:21px"><span style="display:inline-block;text-align:center;width:49px">Tools</span></div>
<div style="left:2136px;top:957px;width:2px;height:15px;background:#909090"></div>
<div style="left:2143px;top:962px;width:8px;height:5px;border-top:6px solid #202020;border-left:4px solid transparent;border-right:4px solid transparent;width:0;height:0;box-sizing:content-box"></div>
<div class="b" style="left:2161px;top:953px;width:71px;height:23px;line-height:21px"><span style="display:inline-block;text-align:center;width:67px">Validate</span></div>
<div class="b" style="left:2238px;top:953px;width:74px;height:23px;line-height:21px"><span style="display:inline-block;text-align:center;width:70px">Close</span></div>
<div class="tb" style="left:0;top:1557px;width:2560px;height:43px"></div>
<div style="left:8px;top:1561px;width:40px;height:38px;border-radius:50%;background:radial-gradient(circle at 50% 50%,#5a9ad0 0,#3a6a9e 45%,#2a4a78 62%,rgba(170,190,210,.7) 72%,rgba(60,90,130,.4) 82%)"></div>
<div style="left:19px;top:1569px;width:9px;height:9px;background:#d88848;border-radius:2px 0 0 0;opacity:.85"></div>
<div style="left:29px;top:1569px;width:9px;height:9px;background:#90b060;border-radius:0 2px 0 0;opacity:.85"></div>
<div style="left:19px;top:1579px;width:9px;height:9px;background:#4a98d8;border-radius:0 0 0 2px;opacity:.85"></div>
<div style="left:29px;top:1579px;width:9px;height:9px;background:#e0b848;border-radius:0 0 2px 0;opacity:.85"></div>
<div style="left:74px;top:1567px;width:26px;height:24px;border-radius:3px;background:#8cc8f0"></div>
<div style="left:78px;top:1570px;width:18px;height:18px;border-radius:50%;background:#f0a020"></div>
<div style="left:84px;top:1574px;width:7px;height:7px;border-radius:50%;background:#fff6d8"></div>
<div class="tbb" style="left:121px;top:1560px;width:159px;height:40px"></div>
<div style="left:132px;top:1565px;width:22px;height:30px;background:linear-gradient(90deg,#f8e890,#e8b840);border-radius:2px"></div>
<div style="left:140px;top:1570px;width:8px;height:22px;background:#d89020"></div>
<div class="t" style="left:166px;top:1572px;text-align:left;font-size:11px;color:#f0f4f8;letter-spacing:.3px">cpu-z_1.78-en</div>
<div style="left:300px;top:1564px;width:30px;height:31px;border-radius:50%;border:6px solid #48a8f0;background:#8cc0e8"></div>
<div style="left:304px;top:1577px;width:24px;height:5px;background:#48a8f0"></div>
<div style="left:318px;top:1582px;width:14px;height:6px;background:#8cc0e8"></div>
<div style="left:294px;top:1560px;width:40px;height:40px;border-radius:50%;border:5px solid transparent;border-top-color:#f0b030;border-left-color:#e0a028;transform:rotate(15deg)"></div>
<div class="tbb" style="left:345px;top:1561px;width:156px;height:39px"></div>
<div style="left:355px;top:1564px;width:33px;height:32px;background:#4a1a8e;border:2px solid #2c0c60"></div>
<div style="left:362px;top:1571px;width:19px;height:18px;border:2px solid #e0d8f0"></div>
<div style="left:366px;top:1575px;width:9px;height:10px;background:#f8f8ff"></div>
<div class="t" style="left:395px;top:1572px;text-align:left;font-size:11px;color:#e8eef4;letter-spacing:.4px">CPU-Z</div>
<div class="tbb" style="left:506px;top:1561px;width:156px;height:39px"></div>
<div style="left:516px;top:1564px;width:33px;height:32px;background:#4a1a8e;border:2px solid #2c0c60"></div>
<div style="left:523px;top:1571px;width:19px;height:18px;border:2px solid #e0d8f0"></div>
<div style="left:527px;top:1575px;width:9px;height:10px;background:#f8f8ff"></div>
<div class="t" style="left:556px;top:1572px;text-align:left;font-size:11px;color:#e8eef4;letter-spacing:.4px">CPU-Z</div>
<div class="tbb" style="left:667px;top:1561px;width:156px;height:39px"></div>
<div style="left:677px;top:1564px;width:33px;height:32px;background:#4a1a8e;border:2px solid #2c0c60"></div>
<div style="left:684px;top:1571px;width:19px;height:18px;border:2px solid #e0d8f0"></div>
<div style="left:688px;top:1575px;width:9px;height:10px;background:#f8f8ff"></div>
<div class="t" style="left:717px;top:1572px;text-align:left;font-size:11px;color:#e8eef4;letter-spacing:.4px">CPU-Z</div>
<div class="tbb" style="left:828px;top:1561px;width:156px;height:39px"></div>
<div style="left:838px;top:1564px;width:33px;height:32px;background:#4a1a8e;border:2px solid #2c0c60"></div>
<div style="left:845px;top:1571px;width:19px;height:18px;border:2px solid #e0d8f0"></div>
<div style="left:849px;top:1575px;width:9px;height:10px;background:#f8f8ff"></div>
<div class="t" style="left:878px;top:1572px;text-align:left;font-size:11px;color:#e8eef4;letter-spacing:.4px">CPU-Z</div>
<div style="left:2280px;top:1574px;width:16px;height:10px;background:#e8e0d0;border-radius:3px;opacity:.85"></div>
<div style="left:2308px;top:1571px;width:20px;height:18px;background:#34406a"></div>
<div style="left:2311px;top:1576px;width:14px;height:8px;background:#8a9a50;border-radius:40%;transform:rotate(-20deg)"></div>
<div style="left:2337px;top:1570px;width:5px;height:12px;background:#f0f0e8"></div>
<div style="left:2340px;top:1580px;width:10px;height:8px;background:#7a8a48;border-radius:50%"></div>
<div style="left:2356px;top:1574px;width:18px;height:10px;background:#e8f2fa;border-radius:50%"></div>
<div style="left:2364px;top:1580px;width:10px;height:8px;background:#2a8ae0;border-radius:50%"></div>
<div style="left:2382px;top:1572px;width:14px;height:14px;border:3px solid #e0e0e0;border-width:0 3px 3px 0;transform:rotate(45deg);opacity:.8"></div>
<div style="left:2405px;top:1574px;width:18px;height:10px;background:#8a7a40;border-radius:50%;transform:rotate(-30deg)"></div>
<div style="left:2431px;top:1572px;width:7px;height:14px;background:#f4f6f8;border-radius:2px"></div>
<div style="left:2439px;top:1575px;width:5px;height:8px;background:#a8b8c8"></div>
<div style="left:2455px;top:1572px;width:7px;height:7px;background:#e8e8e8"></div>
<div style="left:2463px;top:1572px;width:7px;height:7px;background:#303050"></div>
<div style="left:2455px;top:1580px;width:7px;height:7px;background:#2a3050"></div>
<div style="left:2463px;top:1580px;width:7px;height:8px;background:#f0a020"></div>
<div class="t" style="left:2490px;top:1562px;text-align:left;font-size:12px;color:#f4f8fc;width:40px;text-align:center;letter-spacing:.5px;text-rendering:auto">19:25</div>
<div class="t" style="left:2478px;top:1580px;text-align:left;font-size:12px;color:#f4f8fc;width:64px;text-align:center;letter-spacing:.3px;text-rendering:auto">2016/5/13</div>
<div style="left:2544px;top:1558px;width:16px;height:42px;border-left:2px solid rgba(200,220,240,.5);background:rgba(255,255,255,.1)"></div></div></body></html>
